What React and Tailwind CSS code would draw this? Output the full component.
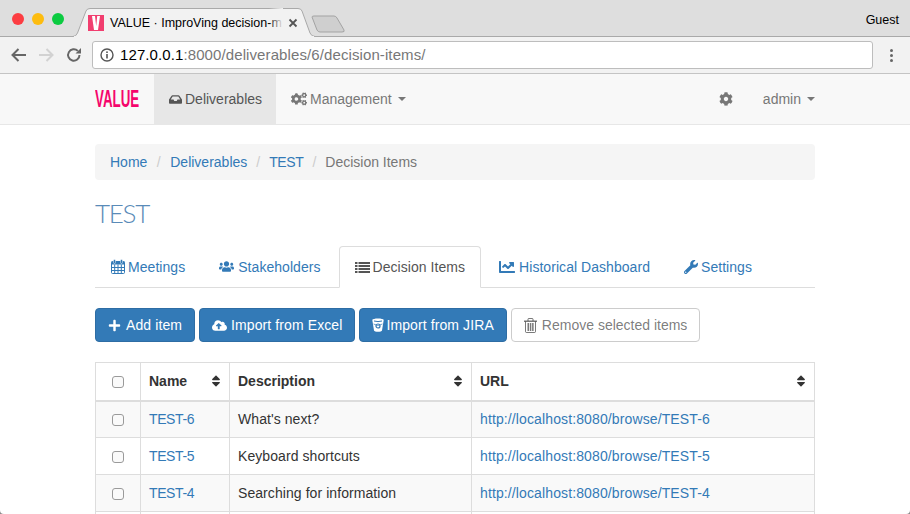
import React from "react";
import { FaInbox, FaCogs, FaCog, FaUsers, FaChartLine, FaWrench, FaPlus, FaCloudUploadAlt, FaSort } from "react-icons/fa";

const Caret = ({ tight }) => (
  <span className={"inline-block align-middle w-0 h-0 border-x-4 border-x-transparent border-t-4 border-t-[#777] " + (tight ? "ml-[3px]" : "ml-[6px]")} />
);

const CalendarIcon = () => (
  <svg width="14" height="15" viewBox="0 0 14 15" className="shrink-0">
    <rect x="0.5" y="2.5" width="13" height="12" rx="1" fill="none" stroke="currentColor" />
    <rect x="0.5" y="2.5" width="13" height="3" fill="currentColor" />
    <path d="M0.5 8.5 H13.5 M0.5 11.5 H13.5 M3.7 5.5 V14.5 M7 5.5 V14.5 M10.3 5.5 V14.5" stroke="currentColor" strokeWidth="1" fill="none" />
    <rect x="2.5" y="0.5" width="2" height="4" rx="1" fill="currentColor" stroke="#fff" strokeWidth="0.5" />
    <rect x="9.5" y="0.5" width="2" height="4" rx="1" fill="currentColor" stroke="#fff" strokeWidth="0.5" />
  </svg>
);

const ListIcon = () => (
  <svg width="15" height="13" viewBox="0 0 15 13" className="shrink-0" fill="currentColor">
    <rect x="0" y="1" width="2.5" height="2" /><rect x="3.5" y="1" width="11.5" height="2" />
    <rect x="0" y="4" width="2.5" height="2" /><rect x="3.5" y="4" width="11.5" height="2" />
    <rect x="0" y="7" width="2.5" height="2" /><rect x="3.5" y="7" width="11.5" height="2" />
    <rect x="0" y="10" width="2.5" height="2" /><rect x="3.5" y="10" width="11.5" height="2" />
  </svg>
);

const BucketIcon = () => (
  <svg width="12" height="14" viewBox="0 0 12 14" className="shrink-0">
    <path d="M0.3 2 C0.3 0 11.7 0 11.7 2 L10 12.5 C9.8 14.3 2.2 14.3 2 12.5 Z" fill="#fff" />
    <path d="M2 3 Q6 4.2 10 3" fill="none" stroke="#337ab7" strokeWidth="1" />
    <circle cx="6" cy="8" r="2" fill="none" stroke="#337ab7" strokeWidth="1.2" />
    <path d="M1.5 6 Q6 9 10.5 6" fill="none" stroke="#337ab7" strokeWidth="0.7" />
  </svg>
);

const TrashIcon = () => (
  <svg width="13" height="15" viewBox="0 0 13 15" className="shrink-0" fill="currentColor">
    <path d="M0 2.5 H13 V4 H0 Z" />
    <path d="M4 3 V1.2 Q4 .5 4.8 .5 H8.2 Q9 .5 9 1.2 V3" fill="none" stroke="currentColor" />
    <path d="M1.5 3.5 V13.5 Q1.5 14.5 2.5 14.5 H10.5 Q11.5 14.5 11.5 13.5 V3.5" fill="none" stroke="currentColor" />
    <rect x="3.5" y="5" width="1.5" height="8" /><rect x="5.8" y="5" width="1.5" height="8" /><rect x="8.1" y="5" width="1.5" height="8" />
  </svg>
);

function BrowserTab() {
  return (
    <div className="relative w-[244px] h-[29px] ml-[72px] mt-[8px] flex items-center pl-[16px] shrink-0">
      <svg className="absolute left-0 top-0" width="244" height="29" viewBox="0 0 244 29">
        <path d="M0 28.5 H1 Q4 28.5 5.5 25 L14 3 Q15 .5 18 .5 H226 Q229 .5 230 3 L238 25 Q239.5 28.5 243 28.5 H244 V29 H0 Z" fill="#f2f2f2" stroke="#a9a9a9" strokeWidth="1" />
        <rect x="2" y="28" width="240" height="2" fill="#f2f2f2" />
      </svg>
      <svg className="relative shrink-0" width="16" height="16" viewBox="0 0 16 16">
        <rect width="16" height="16" fill="#f13e6f" />
        <path d="M4 1 H7 L8.2 11 L9.2 1 H12 L10 15 H6 Z" fill="#fff" />
      </svg>
      <span className="relative ml-[6px] whitespace-nowrap text-[12.5px] text-black">VALUE · ImproVing decision-m</span>
      <span className="absolute right-[33px] top-0 h-full w-[14px] bg-gradient-to-r from-transparent to-[#f2f2f2]" />
      <svg className="absolute right-[15px] top-[7px]" width="16" height="16" viewBox="0 0 16 16"><path d="M4.5 4.5 L11.5 11.5 M11.5 4.5 L4.5 11.5" stroke="#555" strokeWidth="1.8" /></svg>
    </div>
  );
}

function Tab({ icon, children, active, wide }) {
  return active ? (
    <div className="h-[42px] -mb-px mr-[2px] px-[15px] flex items-center gap-[3px] bg-white border border-[#ddd] border-b-white rounded-t-[4px] text-[#555] text-[14px] tracking-[0.05px]">
      {icon}
      {children}
    </div>
  ) : (
    <div className={"h-[41px] mr-[2px] px-[16px] flex items-center text-[#337ab7] text-[14px] tracking-[0.05px] " + (wide ? "gap-[4px]" : "gap-[3px]")}>
      {icon}
      {children}
    </div>
  );
}

const Btn = ({ icon, children, gap }) => (
  <div className={"h-[34px] px-[12px] flex items-center bg-[#337ab7] border border-[#2e6da4] rounded-[4px] text-white text-[14px] tracking-[0.1px] " + gap}>
    {icon}
    {children}
  </div>
);

const Box = () => <span className="block mt-px mx-auto w-[12px] h-[12px] rounded-[3px] border border-[#9a9a9a] bg-[#fafafa]" />;

const th = "border border-[#ddd] border-b-2 px-[8px] h-[38px] text-left font-bold text-[#333]";
const td = "border border-[#ddd] px-[8px] h-[37px] text-[#333] tracking-[0.07px]";
const Sep = ({ first }) => <span className={"text-[#ccc] " + (first ? "px-[9.5px]" : "px-[9px]")}>/</span>;
const Sort = () => <FaSort size={14} className="-mr-[2px]" />;

const rows = [
  ["TEST-6", "What's next?", "http://localhost:8080/browse/TEST-6"],
  ["TEST-5", "Keyboard shortcuts", "http://localhost:8080/browse/TEST-5"],
  ["TEST-4", "Searching for information", "http://localhost:8080/browse/TEST-4"],
  ["", "", ""],
];

export default function App() {
  return (
    <div className="w-[910px] h-[514px] overflow-hidden bg-[#8a8a8a]">
      <div className="h-[514px] overflow-hidden rounded-b-[4px] bg-white font-['Liberation_Sans',Arial,sans-serif] text-[14px] leading-[20px]">
        {/* tab strip */}
        <div className="h-[37px] bg-[#dedede] border-b border-[#a9a9a9] flex relative">
          <div className="absolute left-[12px] top-[13px] flex gap-[8px]">
            <span className="w-[12px] h-[12px] rounded-full bg-[#fc3d42]" />
            <span className="w-[12px] h-[12px] rounded-full bg-[#fdbc0f]" />
            <span className="w-[12px] h-[12px] rounded-full bg-[#0ccb41]" />
          </div>
          <BrowserTab />
          <svg className="mt-[15px] -ml-[5px]" width="35" height="18" viewBox="0 0 35 18">
            <path d="M1 2 Q1 1 3 1 H23 Q25 1 26 3 L33 15 Q34 17 31 17 H9 Q7 17 6 15 Z" fill="#cfcfcf" stroke="#a3a3a3" />
          </svg>
          <span className="absolute right-[11px] top-[10px] text-[12.5px] text-black">Guest</span>
        </div>
        {/* toolbar */}
        <div className="h-[37px] bg-[#f2f2f2] border-b border-[#c4c4c4] flex items-center">
          <svg className="ml-[10px]" width="17" height="16" viewBox="0 0 17 16"><path d="M16 8 H3 M8.5 2 L2.5 8 L8.5 14" fill="none" stroke="#666" strokeWidth="2" /></svg>
          <svg className="ml-[11px]" width="17" height="16" viewBox="0 0 17 16"><path d="M1 8 H14 M8.5 2 L14.5 8 L8.5 14" fill="none" stroke="#d2d2d2" strokeWidth="2" /></svg>
          <svg className="ml-[11px]" width="16" height="16" viewBox="0 0 16 16"><path d="M13.5 8 A5.7 5.7 0 1 1 11.8 3.9" fill="none" stroke="#666" strokeWidth="2" /><path d="M9.5 6.5 H15 V1 Z" fill="#666" /></svg>
          <div className="ml-[10px] w-[781px] h-[28px] bg-white border border-[#bdbdbd] rounded-[3px] flex items-center pl-[7px] text-[15px]">
            <svg width="14" height="14" viewBox="0 0 14 14"><circle cx="7" cy="7" r="6" fill="none" stroke="#555" strokeWidth="1.4" /><rect x="6.2" y="6" width="1.6" height="4.5" fill="#555" /><rect x="6.2" y="3.4" width="1.6" height="1.6" fill="#555" /></svg>
            <span className="ml-[6px] text-black tracking-[0.1px]">127.0.0.1<span className="text-[#777]">:8000/deliverables/6/decision-items/</span></span>
          </div>
          <span className="ml-[17px] flex flex-col gap-[2px]">
            <i className="block w-[3px] h-[3px] rounded-full bg-[#666]" />
            <i className="block w-[3px] h-[3px] rounded-full bg-[#666]" />
            <i className="block w-[3px] h-[3px] rounded-full bg-[#666]" />
          </span>
        </div>
        {/* navbar */}
        <div className="h-[51px] bg-[#f8f8f8] border-b border-[#e7e7e7]">
          <div className="w-[720px] mx-auto flex items-center h-[50px] text-[#777]">
            <span className="w-[59px] h-full flex items-center">
              <span className="block w-[44px]">
                <span className="block origin-left scale-x-[0.58] text-[23px] font-bold text-[#f5056c] whitespace-nowrap">VALUE</span>
              </span>
            </span>
            <div className="h-full w-[122px] pl-[15px] bg-[#e7e7e7] text-[#555] flex items-center gap-[3px]"><FaInbox size={13} />Deliverables</div>
            <div className="h-full px-[15px] flex items-center gap-[3px]"><FaCogs size={16} />Management<Caret tight /></div>
            <FaCog size={14} className="ml-auto mr-[30px]" />
            <div className="flex items-center">admin<Caret /></div>
          </div>
        </div>
        {/* content */}
        <div className="w-[720px] mx-auto pt-[19px]">
          <div className="h-[36px] bg-[#f5f5f5] rounded-[4px] flex items-center px-[15px] whitespace-pre">
            <span className="text-[#337ab7]">Home</span>
            <Sep first />
            <span className="text-[#337ab7]">Deliverables</span>
            <Sep />
            <span className="text-[#337ab7] tracking-[-0.4px]">TEST</span>
            <Sep />
            <span className="text-[#777]">Decision Items</span>
          </div>
          <h1 className="mt-[20px] h-[26px] text-[26px] leading-[26px] font-light text-[#5a8bb8] font-['Lato',sans-serif] tracking-[-1.3px]">TEST</h1>
          <div className="mt-[20px] h-[42px] flex items-end border-b border-[#ddd]">
            <Tab icon={<CalendarIcon />}>Meetings</Tab>
            <Tab wide icon={<FaUsers size={15} className="shrink-0" />}>Stakeholders</Tab>
            <Tab active icon={<ListIcon />}>Decision Items</Tab>
            <Tab wide icon={<FaChartLine size={16} className="shrink-0" />}>Historical Dashboard</Tab>
            <Tab icon={<FaWrench size={14} className="shrink-0" />}>Settings</Tab>
          </div>
          <div className="mt-[20px] flex gap-[4px]">
            <Btn gap="gap-[5px]" icon={<FaPlus size={13} />}>Add item</Btn>
            <Btn gap="gap-[4px]" icon={<FaCloudUploadAlt size={15} />}>Import from Excel</Btn>
            <Btn gap="gap-[2px]" icon={<BucketIcon />}>Import from JIRA</Btn>
            <div className="h-[34px] px-[12px] flex items-center gap-[5px] bg-white border border-[#ccc] rounded-[4px] text-[#333]/65 text-[14px]">
              <TrashIcon />Remove selected items
            </div>
          </div>
          <table className="mt-[20px] w-[719px] table-fixed border-collapse">
            <colgroup>
              <col className="w-[45px]" />
              <col className="w-[89px]" />
              <col className="w-[242px]" />
              <col className="w-[343px]" />
            </colgroup>
            <thead>
              <tr>
                <th className={th}><Box /></th>
                <th className={th}><span className="flex items-center justify-between">Name<Sort /></span></th>
                <th className={th}><span className="flex items-center justify-between">Description<Sort /></span></th>
                <th className={th}><span className="flex items-center justify-between">URL<Sort /></span></th>
              </tr>
            </thead>
            <tbody>
              {rows.map((r, i) => (
                <tr key={i} className={i % 2 === 0 ? "bg-[#f9f9f9]" : "bg-white"}>
                  <td className={td}>{r[0] && <Box />}</td>
                  <td className={td}><span className="text-[#337ab7] tracking-[-0.4px]">{r[0]}</span></td>
                  <td className={td}>{r[1]}</td>
                  <td className={td}><span className="text-[#337ab7] tracking-[0.12px]">{r[2]}</span></td>
                </tr>
              ))}
            </tbody>
          </table>
        </div>
      </div>
    </div>
  );
}
